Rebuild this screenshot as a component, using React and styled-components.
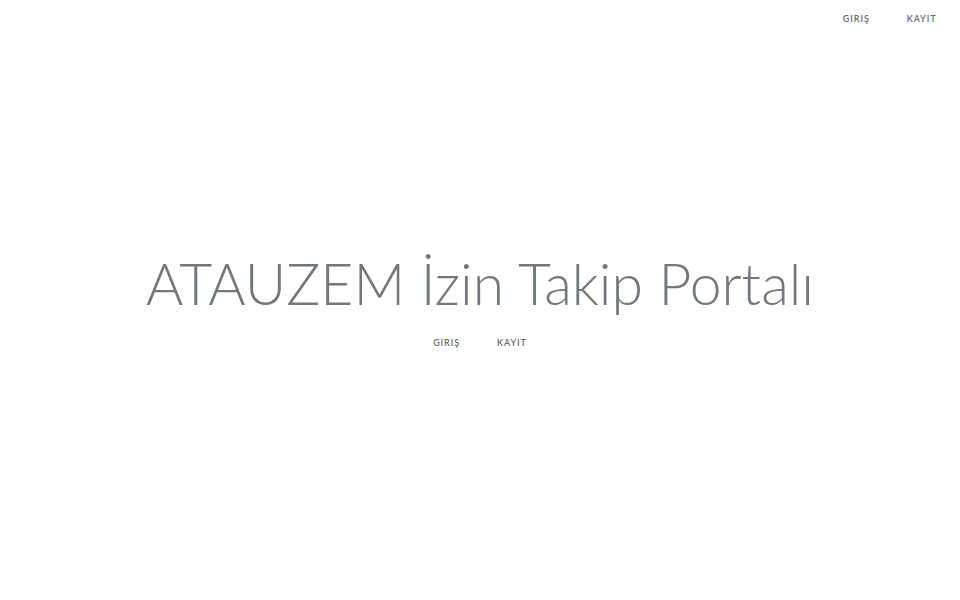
import React from "react";
import styled, { createGlobalStyle } from "styled-components";

const GlobalStyle = createGlobalStyle`
  html, body {
    margin: 0;
    padding: 0;
    background: #fff;
    color: #636b6f;
    font-family: "Lato", "Open Sans", sans-serif;
    font-weight: 300;
    height: 100%;
  }
  #root { height: 100%; }
`;

const Page = styled.div`
  height: 100vh;
  display: flex;
  flex-direction: column;
`;

const TopBar = styled.nav`
  display: flex;
  justify-content: flex-end;
  padding: 13px 5px 0 0;
`;

const Links = styled.div`
  display: flex;
  justify-content: ${(p) => (p.center ? "center" : "flex-end")};
`;

const LinkItem = styled.a`
  color: #636b6f;
  padding: 0 18.5px;
  font-family: "Lato", "Open Sans", sans-serif;
  font-size: 9px;
  font-weight: 600;
  letter-spacing: 0.9px;
  text-decoration: none;
  text-transform: uppercase;
  line-height: 12px;
`;

const Content = styled.main`
  flex: 1;
  display: flex;
  flex-direction: column;
  align-items: center;
  justify-content: center;
  padding-bottom: 24px;
`;

const Title = styled.h1`
  margin: 0 0 23px 0;
  font-size: 57px;
  font-weight: 300;
  line-height: 1.1;
  color: #72787c;
`;

export default function App() {
  return (
    <Page>
      <GlobalStyle />
      <TopBar>
        <Links>
          <LinkItem href="#">Giriş</LinkItem>
          <LinkItem href="#">Kayıt</LinkItem>
        </Links>
      </TopBar>
      <Content>
        <Title>ATAUZEM İzin Takip Portalı</Title>
        <Links center>
          <LinkItem href="#">Giriş</LinkItem>
          <LinkItem href="#">Kayıt</LinkItem>
        </Links>
      </Content>
    </Page>
  );
}
